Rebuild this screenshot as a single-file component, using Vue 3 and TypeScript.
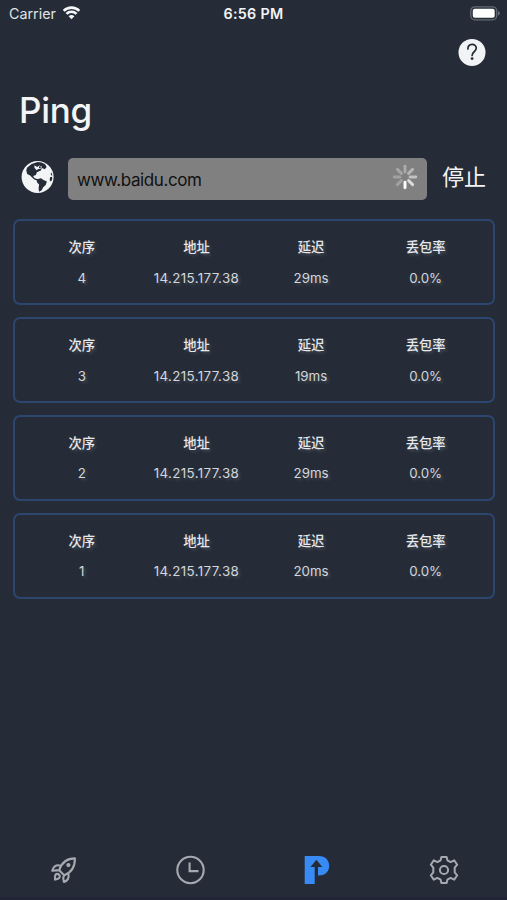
<script setup lang="ts">
interface PingResult {
  seq: number
  address: string
  delay: string
  loss: string
}

const host = 'www.baidu.com'

const results: PingResult[] = [
  { seq: 4, address: '14.215.177.38', delay: '29ms', loss: '0.0%' },
  { seq: 3, address: '14.215.177.38', delay: '19ms', loss: '0.0%' },
  { seq: 2, address: '14.215.177.38', delay: '29ms', loss: '0.0%' },
  { seq: 1, address: '14.215.177.38', delay: '20ms', loss: '0.0%' },
]

// Spoke opacity, clockwise from the top
const spokes: number[] = [0.34, 0.42, 0.52, 0.72, 1, 0.26, 0.26, 0.3]
</script>

<template>
  <div class="screen">
    <header class="status">
      <div class="carrier">
        <span>Carrier</span>
        <svg class="wifi" width="19" height="14" viewBox="0 0 20 15">
          <g fill="none" stroke="#f6f7f9" stroke-width="2.8">
            <path d="M1.6 5.2a12 12 0 0 1 16.8 0" />
            <path d="M4.6 8.4a7.7 7.7 0 0 1 10.8 0" />
          </g>
          <path d="M10 14.3l-3.1-3.2a4.4 4.4 0 0 1 6.2 0z" fill="#f6f7f9" />
        </svg>
      </div>
      <div class="time">6:56 PM</div>
      <div class="power">
        <svg width="31" height="15" viewBox="0 0 31 15">
          <rect x="1.8" y="0.8" width="25.9" height="13" rx="4" fill="none" stroke="#646a73" stroke-width="1.3" />
          <rect x="3.8" y="2.8" width="21.9" height="9" rx="2" fill="#fff" />
          <path d="M29.1 5v4.6c2.2-.8 2.2-3.8 0-4.6z" fill="#747980" />
        </svg>
      </div>
    </header>

    <div class="toolbar">
      <svg width="28" height="28" viewBox="0 0 28 28">
        <circle cx="14" cy="14.4" r="13.5" fill="#f1f3f5" />
        <path d="M9.9 10.9c0-6 8.4-5.7 8.4-.8 0 3.6-4.2 3.7-4.2 7.4" fill="none" stroke="#252b36" stroke-width="1.7" stroke-linecap="round" />
        <circle cx="14.1" cy="20.6" r="1.4" fill="#252b36" />
      </svg>
    </div>

    <h1 class="title">Ping</h1>

    <div class="search">
      <svg class="globe" width="34" height="34" viewBox="0 0 34 34">
        <circle cx="17.6" cy="17" r="16" fill="#f2f4f6" />
        <g fill="#252c37">
          <path d="M7 7.7l4.6-3.8 6.1-1.8 3.8.5 3.6 1.7 1.5 2.6-1.7 2.4-3-1.3-1.1 2.4-3.9 1.9-1 2.6-2.8 1.2 1.2 1.8 2.7 1.1 2.4 1.2-1.1 1-4.3-1.9-3.9-3.7-2.9-1.5-.9-3.6z" />
          <path d="M17 19.2l4-.9 2.5 1.6 3.4 1.7-1.2 3.4-2.5 2.2-1.5 3.1-2.7 1.5-.4-3.9.5-3.3-2.2-2.3z" />
          <path d="M30.9 12.3l1.1 1.5.3 2-1.4-.9zM30 17.2l2-.4.3 2.2-1.2 2.6-1.4-1.2z" />
        </g>
        <path d="M14.5 5.3l2.7 1.6 2-1.5 2.7 1-.7 2-2.8.5-1.8 1.4-2.2-2.5z" fill="#f2f4f6" />
        <path d="M19 6.2l2 .3-.4 1.4-1.6.2z" fill="#252c37" />
      </svg>
      <div class="field">
        <span>{{ host }}</span>
        <svg width="26" height="26" viewBox="-13 -13 26 26">
          <line
            v-for="(alpha, i) in spokes"
            :key="i"
            y1="-5.1"
            y2="-10.8"
            stroke="#fff"
            stroke-width="2.9"
            stroke-linecap="round"
            :opacity="alpha"
            :transform="`rotate(${i * 45})`"
          />
        </svg>
      </div>
      <div class="stop">停止</div>
    </div>

    <main class="list">
      <section v-for="item in results" :key="item.seq" class="card">
        <div class="cell"><b>次序</b><span>{{ item.seq }}</span></div>
        <div class="cell"><b>地址</b><span class="address">{{ item.address }}</span></div>
        <div class="cell"><b>延迟</b><span>{{ item.delay }}</span></div>
        <div class="cell"><b>丢包率</b><span>{{ item.loss }}</span></div>
      </section>
    </main>

    <nav class="tabs">
      <svg width="30" height="30" viewBox="-0.8 0 30 30" fill="none" stroke="#a5a9b0" stroke-width="2.1" stroke-linejoin="round" stroke-linecap="round">
        <path d="M10.4 15.2C12.7 7.8 18.2 3.4 26.1 3.4c.1 8.1-3.8 14.2-10.8 16.8z" />
        <path d="M12.1 10.8c-5-1.6-7.6 1-8.7 5l4.8-.4 2.2-.2M19.4 18.2c1.6 4.6-.6 7.6-4.3 8.8l-.7-3.9.9-2.9" />
        <circle cx="19.6" cy="10.1" r="1.1" />
        <path d="M7.2 19.2c2.4-1 4.8 1.5 3.4 3.6-.9 1.5-2.6 1.3-4.4 1.8.2-2-.6-4.2 1-5.4z" />
      </svg>
      <svg width="30" height="30" viewBox="-0.5 0 30 30" fill="none" stroke="#a5a9b0" stroke-width="2.1">
        <circle cx="15" cy="15" r="13.2" />
        <path d="M14.1 7.4v8.7h8.9" />
      </svg>
      <svg width="30" height="30" viewBox="0 0 30 30">
        <path d="M2.7 1H17C23.3 1 27.2 5.2 27.2 10.8S23.3 20.6 17 20.6H16V11.9H20.3L14.4 4.7L8.5 11.9H12.7V29H2.7z" fill="#388bf5" />
      </svg>
      <svg width="30" height="30" viewBox="0 0 30 30" fill="none" stroke="#a5a9b0" stroke-width="2" stroke-linejoin="round">
        <path d="M12.4 1.9h5.2l.8 3.4 3.2 1.8 3.6-1.8 3 4.4-2.5 2.9v4.8l2.5 2.9-3 4.4-3.6-1.8-3.2 1.8-.8 3.4h-5.2l-.8-3.4-3.2-1.8-3.6 1.8-3-4.4 2.5-2.9v-4.8l-2.5-2.9 3-4.4 3.6 1.8 3.2-1.8z" />
        <circle cx="15" cy="15" r="4.1" />
      </svg>
    </nav>
  </div>
</template>

<style>
body {
  margin: 0;
  background: #252c37;
}
</style>

<style scoped>
.screen {
  box-sizing: border-box;
  display: flex;
  flex-direction: column;
  width: 100%;
  height: 100vh;
  overflow: hidden;
  background: #252c37;
  border-bottom: 3px solid #222334;
  color: #f2f4f6;
  font-family: Inter, "Noto Sans CJK SC", sans-serif;
}

.status {
  display: grid;
  grid-template-columns: 1fr auto 1fr;
  align-items: center;
  height: 27px;
  padding: 0 7px 0 9px;
  font-size: 14.3px;
}

.carrier {
  display: flex;
  align-items: center;
  gap: 6px;
  color: #dfe2e6;
}

.wifi {
  margin-top: -2px;
}

.time {
  margin-right: 2px;
  font-weight: 600;
  letter-spacing: 0.3px;
}

.power {
  display: flex;
  justify-content: flex-end;
}

.toolbar {
  display: flex;
  justify-content: flex-end;
  padding: 11px 21px 0 0;
  height: 28px;
}

.title {
  margin: 22px 0 0 19px;
  font-size: 35px;
  line-height: 44px;
  font-weight: 550;
  letter-spacing: -0.3px;
}

.search {
  display: flex;
  align-items: center;
  height: 42px;
  margin-top: 26px;
  padding: 0 21px 0 20px;
}

.globe {
  flex: none;
  margin-top: -4px;
}

.field {
  box-sizing: border-box;
  display: flex;
  align-items: center;
  justify-content: space-between;
  width: 359px;
  height: 42px;
  margin-left: 14px;
  padding: 2px 9px 0;
  border-radius: 5px;
  background: #808080;
  color: #111;
  font-size: 17px;
  letter-spacing: -0.4px;
}

.field svg {
  margin-top: -6px;
}

.stop {
  margin: -5px 0 0 15px;
  font-size: 22px;
  line-height: 32px;
  white-space: nowrap;
}

.list {
  display: grid;
  gap: 11.8px;
  padding: 19.3px 12px 0 12.5px;
}

.card {
  box-sizing: border-box;
  display: grid;
  grid-template-columns: repeat(4, 1fr);
  height: 86px;
  padding: 16px 10px 0;
  border: 2px solid #2c466f;
  border-radius: 7px;
}

.cell {
  display: flex;
  flex-direction: column;
  align-items: center;
  gap: 10.5px;
  font-size: 13.3px;
  line-height: 20px;
  color: #d3d6dc;
  text-shadow: 2px 2px 3px rgba(150, 155, 165, 0.3);
}

.cell b {
  font-weight: 500;
  color: #e6e8ec;
}

.address {
  letter-spacing: 0.4px;
}

.tabs {
  display: grid;
  grid-template-columns: repeat(4, 1fr);
  justify-items: center;
  margin-top: auto;
  padding-bottom: 12px;
}
</style>
